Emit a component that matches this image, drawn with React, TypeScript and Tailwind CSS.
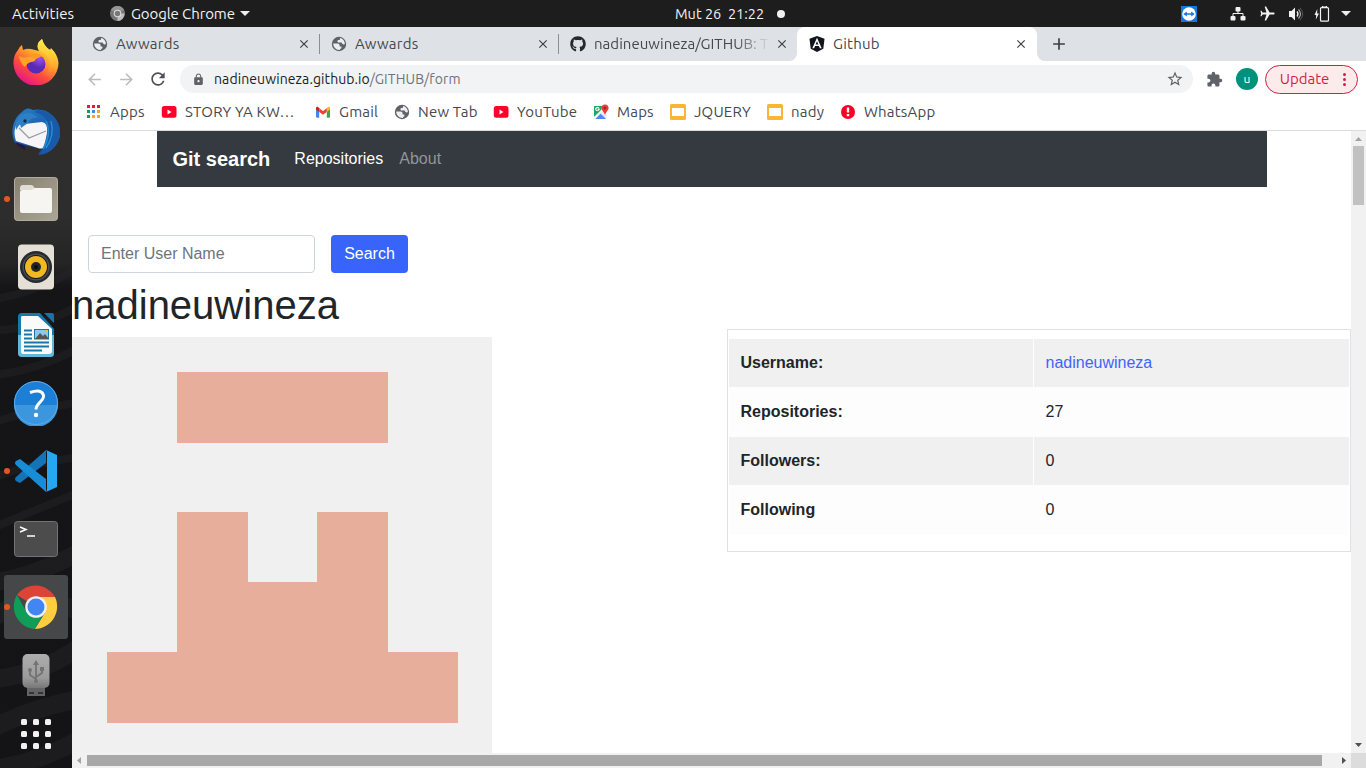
import type { ReactNode } from "react";
import {
  MdArrowBack,
  MdArrowForward,
  MdClose,
  MdExtension,
  MdLock,
  MdRefresh,
  MdStarBorder,
  MdAdd,
  MdAirplanemodeActive,
} from "react-icons/md";
import { FaGithub } from "react-icons/fa";

const ui = "font-['Ubuntu','Noto_Sans',sans-serif]";

function Globe() {
  return (
    <svg className="h-4 w-4 shrink-0" viewBox="0 0 16 16">
      <circle cx="8" cy="8" r="7.2" fill="#5f6368" />
      <path d="M2.2 7.6h4.3c1.5 0 2.1.9 2.1 2.1v.7h1.8v1.3c0 .8-.6 1.2-1.4 1.2v1.1C5.400 14.500 2.200 11.400 2.200 7.600Z" fill="#eceef0" />
      <path d="M9.300 2.100C12 2.700 13.900 5.200 13.900 8c-.9.7-2.100.5-2.600-.3l-.7-1.200H8.100c-1.100 0-1.700-.6-1.700-1.300 0-.9.700-1.300 1.600-1.300h.8c0-.8.100-1.300.5-1.800Z" fill="#eceef0" />
    </svg>
  );
}

function YouTube() {
  return (
    <svg className="h-4 w-4 shrink-0" viewBox="0 0 16 16">
      <rect x=".8" y="2" width="14.700" height="11.700" rx="2.500" fill="#ff0029" />
      <path d="M6.500 5.500v5l4-2.500z" fill="#fff" />
    </svg>
  );
}

function Slides() {
  return (
    <svg className="h-4 w-4 shrink-0" viewBox="0 0 16 16">
      <rect width="16" height="16" rx="1.500" fill="#f7b635" />
      <rect x="2" y="4" width="12" height="8" fill="#fff" />
    </svg>
  );
}

function Gmail() {
  return (
    <svg className="h-4 w-4 shrink-0" viewBox="0 0 16 16">
      <path d="M1 4v8.500c0 .8.500 1.200 1.200 1.200h2V7.500z" fill="#4285f4" />
      <path d="M15 4v8.500c0 .8-.5 1.200-1.200 1.200h-2V7.500z" fill="#34a853" />
      <path d="M11.800 4.200 13 3.100c.9-.6 2 0 2 1.100v1.200l-3.200 2.500z" fill="#fbbc04" />
      <path d="M4.200 4.200 3 3.100c-.9-.6-2 0-2 1.100v1.200l3.200 2.500z" fill="#c5221f" />
      <path d="M4.200 4.200 8 7.100l3.800-2.900v3.700L8 10.800 4.200 7.900z" fill="#ea4335" />
    </svg>
  );
}

function MapsIcon() {
  return (
    <svg className="h-4 w-4 shrink-0" viewBox="0 0 16 16">
      <rect x="1" y="2" width="12.500" height="13" rx="1" fill="#e8eaed" />
      <path d="M1 13V3c0-.6.400-1 1-1h7L8 8z" fill="#1fa463" />
      <path d="m2 15 5.500-5.500L13 15z" fill="#4c8bf5" />
      <path d="m1 13 9-9 1.500 1.500L2 15z" fill="#fff" />
      <path d="M6.800 4.500H4.500v1.200h1.100c-.2.700-1.300 1-2 .2-.6-.7-.2-1.900.9-2 .5 0 .8.200 1 .4l.8-.8c-2-1.700-4.300-.1-4.100 1.800.3 2.800 4.600 2.700 4.600-.8Z" fill="#fff" />
      <path d="M12 .500c2.100 0 3.600 1.500 3.600 3.500 0 2.400-2.500 3.200-3.300 6.500h-.6C10.900 7.200 8.400 6.400 8.400 4 8.400 2 9.900.500 12 .500Z" fill="#ea3c35" />
      <circle cx="12" cy="4" r="1.300" fill="#8b2a26" />
    </svg>
  );
}

function AppsIcon() {
  const colors = ["#e8173c", "#e8173c", "#e8173c", "#0f9d58", "#4285f4", "#f7a32b", "#0f9d58", "#f7a32b", "#f7a32b"];
  return (
    <svg className="h-[14px] w-[14px] shrink-0" viewBox="0 0 14 14" shapeRendering="crispEdges">
      {colors.map((c, i) => (
        <rect key={i} x={(i % 3) * 5} y={Math.floor(i / 3) * 5} width="3" height="3" fill={c} />
      ))}
    </svg>
  );
}

function TopBar() {
  return (
    <header className={`grid h-[27px] shrink-0 grid-cols-[1fr_auto_1fr] items-center bg-[#1d1d1d] text-[15px] leading-[27px] text-[#f2f2f2] ${ui}`}>
      <div className="flex items-center pl-3">
        <span className="w-[98px] tracking-[0.06px]">Activities</span>
        <svg className="h-[15px] w-[15px]" viewBox="0 0 16 16">
          <circle cx="8" cy="8" r="8" fill="#777" />
          <path d="M8 8 1 4a8 8 0 0 1 14 0z" fill="#959595" />
          <path d="M8 8h7.500A8 8 0 0 1 8 16z" fill="#bebebe" />
          <circle cx="8" cy="8" r="4" fill="#ddd" />
          <circle cx="8" cy="8" r="2.900" fill="#777" />
        </svg>
        <span className="ml-[6px] w-[104px] whitespace-nowrap tracking-[-0.1px]">Google Chrome</span>
        <svg className="ml-[5px] h-[5px] w-[10px]" viewBox="0 0 10 5"><path d="M0 0h10L5 5z" fill="#eee" /></svg>
      </div>
      <div className="flex items-center pl-[94px] text-[14.5px]">
        <span className="w-[90px] whitespace-pre">Mut 26  21:22</span>
        <span className="ml-3 h-2 w-2 rounded-full bg-[#f2f2f2]" />
      </div>
      <div className="flex items-center justify-end pr-[15px]">
        <svg className="mr-[33px] h-4 w-4" viewBox="0 0 16 16">
          <rect width="16" height="16" fill="#1478dc" />
          <circle cx="8" cy="8" r="6.800" fill="#fff" />
          <path d="m2.300 8 3.500-2.500v1.700h4.400V5.500L13.700 8l-3.500 2.500V8.800H5.800v1.700z" fill="#1478dc" />
        </svg>
        <svg className="mr-[13px] h-4 w-4" viewBox="0 0 16 16" fill="#f2f2f2">
          <rect x="5.500" y="1" width="5" height="4.500" rx="1" />
          <rect x="0.500" y="10" width="5" height="4.500" rx="1" />
          <rect x="10.500" y="10" width="5" height="4.500" rx="1" />
          <path d="M8 5v2.500M3 10.500v-3h10v3" fill="none" stroke="#f2f2f2" />
        </svg>
        <MdAirplanemodeActive className="mr-3 h-[17px] w-[17px] rotate-90" />
        <svg className="mr-[10px] h-4 w-4" viewBox="0 0 16 16">
          <path d="M1 5h2.500L7 1.500v13L3.500 11H1z" fill="#f2f2f2" />
          <path d="M9 5.500q2 2.500 0 5" fill="none" stroke="#f2f2f2" strokeWidth="1.300" />
          <path d="M10.500 3.500q4 4.500 0 9" fill="none" stroke="#aaa" strokeWidth="1.200" />
          <path d="M12 1.800q5.500 6.200 0 12.400" fill="none" stroke="#555" />
        </svg>
        <svg className="mr-[11px] h-4 w-4" viewBox="0 0 16 16">
          <path d="M3.300 3 .5 9h1.700L1.800 13.500 5 7.500H3.200z" fill="#f2f2f2" />
          <path d="M8.500 1V0h4v1m-5 .7h6q1 0 1 1v11.500q0 1-1 1h-6q-1 0-1-1V2.700q0-1 1-1Z" fill="none" stroke="#f2f2f2" strokeWidth="1.200" />
        </svg>
        <svg className="h-[5px] w-[10px]" viewBox="0 0 10 5"><path d="M0 0h10L5 5z" fill="#eee" /></svg>
      </div>
    </header>
  );
}

function DockItem({ children, running, active }: { children: ReactNode; running?: boolean; active?: boolean }) {
  return (
    <div className={`flex h-16 w-16 items-center rounded-[3px] ${active ? "bg-[#464749]" : ""}`}>
      <span className={`h-[6px] w-[6px] rounded-full ${running ? "bg-[#e95420]" : ""}`} />
      <span className="ml-[2px] flex h-12 w-12 items-center justify-center">{children}</span>
    </div>
  );
}

function Dock() {
  return (
    <aside className="relative isolate flex w-[72px] shrink-0 flex-col items-center gap-1 overflow-hidden bg-[linear-gradient(#302f2e_0px,#2e2d2d_190px,#252526_235px,#151517_262px,#141417)] pt-1">
      <svg className="absolute inset-0 -z-10 h-full w-full" viewBox="0 0 72 741" preserveAspectRatio="none" fill="none">
        <g stroke="#29292b" strokeWidth="8" opacity=".4">
          <path d="M-5 272q40-6 85-32M-5 303q40 0 85-25M-5 348q45-5 85-28M-5 395q35-12 85-20M-5 450q40-15 85-20M-5 500q40-17 85-35" />
          <path d="M-5 555q35-4 85-30M-5 590q35-28 85-5M-5 652q45-5 85-32M-5 700q40-20 85-28M-5 742q45-7 85-30" strokeWidth="18" />
        </g>
      </svg>
      <DockItem>
        <svg className="h-[46px] w-[46px] -translate-y-px" viewBox="0 0 46 46">
          <defs>
            <linearGradient id="fx" x1=".85" y1=".1" x2=".3" y2="1"><stop stopColor="#fff44f" /><stop offset=".35" stopColor="#ffac29" /><stop offset=".68" stopColor="#ff4a3d" /><stop offset="1" stopColor="#e4128c" /></linearGradient>
            <linearGradient id="fy" x1=".6" y1="0" x2=".5" y2="1"><stop stopColor="#fff34d" /><stop offset=".6" stopColor="#ffb52b" /><stop offset="1" stopColor="#ff7139" stopOpacity="0" /></linearGradient>
            <radialGradient id="fp" cx=".7" cy=".2"><stop stopColor="#a14df5" /><stop offset="1" stopColor="#592bb5" /></radialGradient>
          </defs>
          <path d="M5 11q1-3 4-5l1 5q4-2 8-1l8 2Q22 6 29 0q2 8 8 11l1-2q7 7 7.500 15A22.500 22.500 0 0 1 23 46.500 22.500 22.500 0 0 1 .500 25Q0 17 5 11Z" fill="url(#fx)" />
          <path d="M29 0q2 7 8 11 9 8 8 17-5 12-15 11 10-9 6-20-4-5-10-8Q22 5 29 0Z" fill="url(#fy)" />
          <circle cx="23" cy="25" r="9.500" fill="url(#fp)" />
          <path d="M6 17q4 3 9 1 9-1 8 2-1 3-5 3-4 1-6 5Q7 24 6 17Z" fill="#ffa22b" />
          <path d="M15 17q9-5 14 0l-6 3z" fill="#fd9828" />
        </svg>
      </DockItem>
      <DockItem>
        <svg className="h-12 w-12" viewBox="0 0 48 48">
          <defs><linearGradient id="tb" x2=".8" y2="1"><stop stopColor="#2c80c5" /><stop offset=".5" stopColor="#1b64b4" /><stop offset="1" stopColor="#154792" /></linearGradient></defs>
          <path d="M10 5Q15-1 21 3q12-2 20 6 8 8 7 18-2 16-18 21l4-5-8 4 4-5L3 36Q-1 29 1 19 3 10 10 5Z" fill="url(#tb)" />
          <path d="M4 18 30 15q6 1 5 10l-1 13q-3 5-8 3L4 34q-3-8 0-16Z" fill="#f5f5f7" />
          <path d="m7 21 10 10 17-7" fill="none" stroke="#999" strokeWidth="1.200" />
          <path d="M9 8q9-5 17 3-8-1-10 5l-7 5-1-4q-2 3-4 6-2-9 5-15Z" fill="#2c80c5" />
          <path d="M22 5q18 4 13 22l-4 16-5 5q17-2 22-18Q48 5 26 3z" fill="#185aa7" />
          <path d="M34 14q6 13-3 28M39 14q4 14-5 27" stroke="#258bd0" fill="none" strokeWidth="1.500" />
          <circle cx="13" cy="14" r="1.700" fill="#142b4a" />
          <path d="m3 35 9 3 2 5Q7 41 3 35Z" fill="#251747" />
        </svg>
      </DockItem>
      <DockItem running>
        <svg className="h-[44px] w-[44px]" viewBox="0 0 44 44">
          <defs><linearGradient id="fg" x2="1" y2="1"><stop stopColor="#878270" /><stop offset="1" stopColor="#aaa595" /></linearGradient></defs>
          <rect width="44" height="44" rx="4" fill="#b0ab9c" /><rect x="1" y="1" width="42" height="42" rx="3" fill="url(#fg)" />
          <path d="M6 13V11q0-3 3-3h8q2 0 3 2l2 3z" fill="#dfddd5" />
          <path d="M6 15q0-2 2-2h10l3-2h15q2 0 2 2v21q0 2-2 2H8q-2 0-2-2z" fill="#f6f5f2" />
        </svg>
      </DockItem>
      <DockItem>
        <svg className="h-[46px] w-[38px]" viewBox="0 0 38 46">
          <rect x="1" y=".5" width="36" height="45" rx="4" fill="#e4e0d6" />
          <circle cx="19" cy="23" r="16" fill="#272a2f" /><circle cx="19" cy="23" r="13.500" fill="#4c4e54" /><circle cx="19" cy="23" r="12" fill="#15171a" /><circle cx="19" cy="23" r="11" fill="#f0b91f" />
          <circle cx="19" cy="23" r="5" fill="#24272a" /><circle cx="19" cy="23" r="2" fill="#0d0e10" />
        </svg>
      </DockItem>
      <DockItem>
        <svg className="h-[46px] w-[38px]" viewBox="0 0 38 46">
          <path d="M5 1h18l14 16v25q0 3-3 3H5q-4 0-4-4V5q0-4 4-4Z" fill="#1779aa" />
          <path d="M1 23h36v18q0 4-4 4H5q-4 0-4-4z" fill="#65b5dc" />
          <path d="M5 4h16l14 13v22q0 3-3 3H6q-2 0-2-3V6q0-2 1-2Z" fill="#fafafa" />
          <path d="M27 1h8q2 0 2 2v8z" fill="#1a73a0" />
          <path d="M7 18.500h8m-8 4h8m-8 4h8m-8 4h25m-25 4h25m-25 4h18" stroke="#1678a9" strokeWidth="2" />
          <rect x="17.500" y="17.500" width="14" height="9.500" fill="#8fc7e8" stroke="#1678a9" /><path d="m18 27 5-6 3 3 2-2 4 5z" fill="#555" /><path d="M28 18h3v3z" fill="#fcbc19" />
        </svg>
      </DockItem>
      <DockItem>
        <svg className="h-[46px] w-[46px]" viewBox="0 0 46 46">
          <circle cx="23" cy="23" r="22" fill="#1d7ed5" /><path d="M1 25a22 22 0 0 0 44 0z" fill="#3b96dd" />
          <circle cx="23" cy="23" r="21.500" fill="none" stroke="#58aeea" />
          <path d="M17 12.500q12-4 13.500 3c.7 6-7.500 7-7.500 14" fill="none" stroke="#fff" strokeWidth="3" /><circle cx="23" cy="35" r="2.200" fill="#fff" />
        </svg>
      </DockItem>
      <DockItem running>
        <svg className="h-[44px] w-[44px]" viewBox="0 0 44 44">
          <path d="M32 1v13L6 34l-4-2q-2-2 0-4z" fill="#1374b7" />
          <path d="M32 43V30L6 10l-4 2q-2 2 0 4z" fill="#168dd6" />
          <path d="M32 1 43 6v32l-11 5q1-1 1-4V4q0-2-1-3Z" fill="#25a7f2" />
        </svg>
      </DockItem>
      <DockItem>
        <svg className="h-9 w-[44px]" viewBox="0 0 44 36">
          <rect x=".5" y=".5" width="43" height="35" rx="3" fill="#4c4c4c" stroke="#747474" />
          <path d="m6 6 6 2.500L6 11m7 4h8" fill="none" stroke="#fff" strokeWidth="1.500" />
        </svg>
      </DockItem>
      <DockItem running active>
        <svg className="h-[46px] w-[46px]" viewBox="0 0 46 46">
          <path d="M23 23 4 11a22.500 22.500 0 0 1 38 2z" fill="#db4437" />
          <path d="m13 27-9-16a22.500 22.500 0 0 0 18 34l10-18z" fill="#0f9d58" />
          <path d="M23 13h19a22.500 22.500 0 0 1-20 32l11-18z" fill="#ffcd40" />
          <circle cx="23" cy="23" r="10.800" fill="#f1f1f1" /><circle cx="23" cy="23" r="8.500" fill="#4285f4" />
        </svg>
      </DockItem>
      <DockItem>
        <svg className="h-[44px] w-7" viewBox="0 0 28 44">
          <defs><linearGradient id="usb" x2="0" y2="1"><stop stopColor="#adadad" /><stop offset=".7" stopColor="#9b9b9b" /><stop offset="1" stopColor="#777" /></linearGradient></defs>
          <path d="M5 34h18v9H5z" fill="#646464" /><path d="M7 39h5v2H7zm9 0h5v2h-5z" fill="#333" />
          <rect x=".5" y="1" width="27" height="34" rx="5" fill="url(#usb)" />
          <path d="M14 28V10m0 16-6-4v-4m6 6 6-4v-4" fill="none" stroke="#737373" strokeWidth="1.800" /><path d="m11 12 3-5 3 5z" fill="#737373" /><circle cx="14" cy="28" r="2" fill="#737373" /><circle cx="8" cy="17" r="2" fill="#737373" /><path d="M18 14h4v4h-4z" fill="#737373" />
        </svg>
      </DockItem>
      <div className="mt-2 grid grid-cols-3 gap-[6px]">
        {Array.from({ length: 9 }, (_, i) => <span key={i} className="h-[6px] w-[6px] rounded-[1.500px] bg-[#f2f1ef]" />)}
      </div>
    </aside>
  );
}

function TabBody({ icon, title, fade, end }: { icon: ReactNode; title: string; fade?: boolean; end?: boolean }) {
  return (
    <>
      {icon}
      <span className={`ml-2 min-w-0 flex-1 whitespace-nowrap ${fade ? "tracking-[0.03px] mask-r-from-80% mask-r-to-100%" : "tracking-[0.25px]"}`}>{title}</span>
      <MdClose className="ml-[5px] h-[14px] w-[14px] shrink-0 text-[#3c4043]" />
      {end && <span className="ml-2 h-5 w-px shrink-0 bg-[#8b8e92]" />}
    </>
  );
}

function TabStrip() {
  return (
    <div className="flex h-[34px] shrink-0 text-[15px] text-[#45484c]">
      <div className="flex w-[725px] shrink-0 rounded-br-lg bg-[#dee1e6]">
        <div className="flex w-[248px] items-center pl-5"><TabBody icon={<Globe />} title="Awwards" end /></div>
        <div className="flex w-[239px] items-center pl-[11px]"><TabBody icon={<Globe />} title="Awwards" end /></div>
        <div className="flex w-[238px] items-center pr-2 pl-[11px]">
          <TabBody icon={<FaGithub className="h-4 w-4 shrink-0 text-[#24292e]" />} title="nadineuwineza/GITHUB: T" fade />
        </div>
      </div>
      <div className="w-[240px] shrink-0 bg-[linear-gradient(#dee1e6_50%,#fff_50%)]">
        <div className="flex h-full items-center rounded-t-lg bg-white pr-[9px] pl-3">
          <TabBody
            icon={
              <svg className="h-4 w-4 shrink-0" viewBox="0 0 16 16">
                <path d="M8 0l7.500 2.700-1.200 10L8 16l-6.300-3.300-1.200-10z" fill="#10141c" />
                <path d="M8 1.800 3.300 12.200h1.800l1-2.300h3.800l1 2.300h1.800zM8 5.300l1.400 3.200H6.600z" fill="#fff" />
              </svg>
            }
            title="Github"
          />
        </div>
      </div>
      <div className="flex flex-1 items-center rounded-bl-lg bg-[#dee1e6] pl-[12px]"><MdAdd className="h-5 w-5 text-[#3c4043]" /></div>
    </div>
  );
}

function Toolbar() {
  return (
    <div className="flex h-9 shrink-0 items-center bg-white pr-2 pl-[13px] text-[#5f6368]">
      <MdArrowBack className="h-[19px] w-[19px] text-[#babcbe]" />
      <MdArrowForward className="ml-[13px] h-[19px] w-[19px] text-[#babcbe]" />
      <MdRefresh className="ml-[12px] h-5 w-5 text-[#4c5054]" />
      <div className="ml-3 flex h-7 flex-1 items-center rounded-full bg-[#f1f3f4] pr-[9px] pl-3">
        <MdLock className="h-[13px] w-[13px]" />
        <span className="ml-[9px] flex-1 text-[14px] tracking-[0.1px] text-[#202124]">nadineuwineza.github.io<span className="text-[#707478]">/GITHUB/form</span></span>
        <MdStarBorder className="h-[18px] w-[18px]" />
      </div>
      <MdExtension className="ml-[13px] h-[17px] w-[17px]" />
      <span className="ml-[13px] flex h-[22px] w-[22px] items-center justify-center rounded-full bg-[#00917c] text-[12px] text-white">u</span>
      <button className="ml-[7px] flex h-[29px] w-[93px] items-center rounded-full border border-[#d81b46] bg-[#fcebeb] pl-3 text-[15px] text-[#d81b46]">
        <span className="w-[53px]">Update</span>
        <span className="ml-3 flex flex-col gap-[2px]">
          <i className="h-[3px] w-[3px] rounded-full bg-[#d81b46]" /><i className="h-[3px] w-[3px] rounded-full bg-[#d81b46]" /><i className="h-[3px] w-[3px] rounded-full bg-[#d81b46]" />
        </span>
      </button>
    </div>
  );
}

function Bookmarks() {
  return (
    <div className="flex h-[34px] shrink-0 items-center border-b border-[#d9dbdd] bg-white pb-[3px] pl-[15px] text-[15px] tracking-[0.2px] whitespace-nowrap text-[#45484c]">
      <div className="flex w-[74px] items-center"><AppsIcon /><span className="ml-[9px]">Apps</span></div>
      <div className="flex w-[154px] items-center"><YouTube /><span className="ml-2">STORY YA KW…</span></div>
      <div className="flex w-[79px] items-center"><Gmail /><span className="ml-2">Gmail</span></div>
      <div className="flex w-[99px] items-center"><Globe /><span className="ml-2">New Tab</span></div>
      <div className="flex w-[100px] items-center"><YouTube /><span className="ml-2">YouTube</span></div>
      <div className="flex w-[77px] items-center"><MapsIcon /><span className="ml-2">Maps</span></div>
      <div className="flex w-[97px] items-center"><Slides /><span className="ml-2">JQUERY</span></div>
      <div className="flex w-[73px] items-center"><Slides /><span className="ml-2">nady</span></div>
      <div className="flex items-center">
        <svg className="h-4 w-4" viewBox="0 0 16 16"><circle cx="8" cy="8" r="7" fill="#fb0024" /><path d="M6.800 3.500h2.400v5H6.800zm0 6.500h2.400v2.200H6.800z" fill="#fff" /></svg>
        <span className="ml-2">WhatsApp</span>
      </div>
    </div>
  );
}

const rows = [
  { label: "Username:", value: "nadineuwineza", link: true },
  { label: "Repositories:", value: "27" },
  { label: "Followers:", value: "0" },
  { label: "Following", value: "0" },
];

function Page() {
  return (
    <main className="h-[622px] flex-1 overflow-hidden bg-white font-['Liberation_Sans',sans-serif] text-base leading-6 text-[#212529]">
      <nav className="mr-[84px] ml-[85px] flex h-14 items-center bg-[#343a40] pl-[15.5px]">
        <a className="text-[20px] font-bold text-white">Git search</a>
        <a className="ml-6 text-white">Repositories</a>
        <a className="ml-4 text-[#929599]">About</a>
      </nav>
      <form className="mt-12 flex gap-4 pl-4">
        <input className="h-[38px] w-[227px] rounded border border-[#ced4da] px-3 pb-px placeholder:text-[#6c757d]" placeholder="Enter User Name" />
        <button type="button" className="h-[38px] w-[77px] rounded bg-[#3864fb] pb-px text-white">Search</button>
      </form>
      <h1 className="mt-2 h-12 text-[40px] leading-[48px]">nadineuwineza</h1>
      <div className="flex items-start justify-between">
        <svg className="mt-2 h-[420px] w-[420px]" viewBox="0 0 420 420" shapeRendering="crispEdges">
          <path fill="#f0f0f0" d="M0 0h420v420H0z" />
          <path fill="#e6ae9b" d="M105 35h211v71H105zM105 175h71v70h69v-70h71v140h70v71H35v-71h70z" />
        </svg>
        <section className="flex h-[223px] w-[624px] flex-col border border-[#dee2e6] px-px pt-[9px]">
          {rows.map((r, i) => (
            <div key={r.label} className="grid h-[49px] shrink-0 grid-cols-[304px_1fr] gap-px bg-[#fdfdfd] pb-px">
              <div className={`pt-3 pl-[11.5px] font-bold ${i % 2 ? "" : "bg-[#f0f0f0]"}`}>{r.label}</div>
              <div className={`pt-3 pl-[11.5px] ${i % 2 ? "" : "bg-[#f0f0f0]"} ${r.link ? "text-[#3f63fb]" : ""}`}>{r.value}</div>
            </div>
          ))}
        </section>
      </div>
    </main>
  );
}

function VerticalScrollbar() {
  return (
    <div className="flex w-[15px] shrink-0 flex-col items-center bg-[#f1f1f1]">
      <svg className="h-[15px] w-[15px]" viewBox="0 0 15 15"><path d="M4 10h7L7.500 6z" fill="#a3a3a3" /></svg>
      <div className="h-[59px] w-[11px] bg-[#c1c1c1]" />
      <svg className="mt-auto h-[15px] w-[15px]" viewBox="0 0 15 15"><path d="M4 5h7L7.500 9z" fill="#505050" /></svg>
    </div>
  );
}

function HorizontalScrollbar() {
  return (
    <div className="flex h-[15px] shrink-0 items-center bg-[#f1f1f1]">
      <svg className="h-[15px] w-[15px]" viewBox="0 0 15 15"><path d="M9 4v7L5 7.500z" fill="#a3a3a3" /></svg>
      <div className="h-[11px] w-[1235px] bg-[#a8a8a8]" />
      <svg className="ml-[14px] h-[15px] w-[15px]" viewBox="0 0 15 15"><path d="M6 4v7l4-3.500z" fill="#505050" /></svg>
      <div className="ml-auto h-full w-[15px] bg-[#dcdcdc]" />
    </div>
  );
}

export default function App() {
  return (
    <div className="flex h-[768px] w-[1366px] flex-col overflow-hidden bg-white">
      <TopBar />
      <div className="flex min-h-0 flex-1">
        <Dock />
        <div className={`flex min-w-0 flex-1 flex-col ${ui}`}>
          <TabStrip />
          <Toolbar />
          <Bookmarks />
          <div className="flex h-[622px] shrink-0">
            <Page />
            <VerticalScrollbar />
          </div>
          <HorizontalScrollbar />
        </div>
      </div>
    </div>
  );
}
